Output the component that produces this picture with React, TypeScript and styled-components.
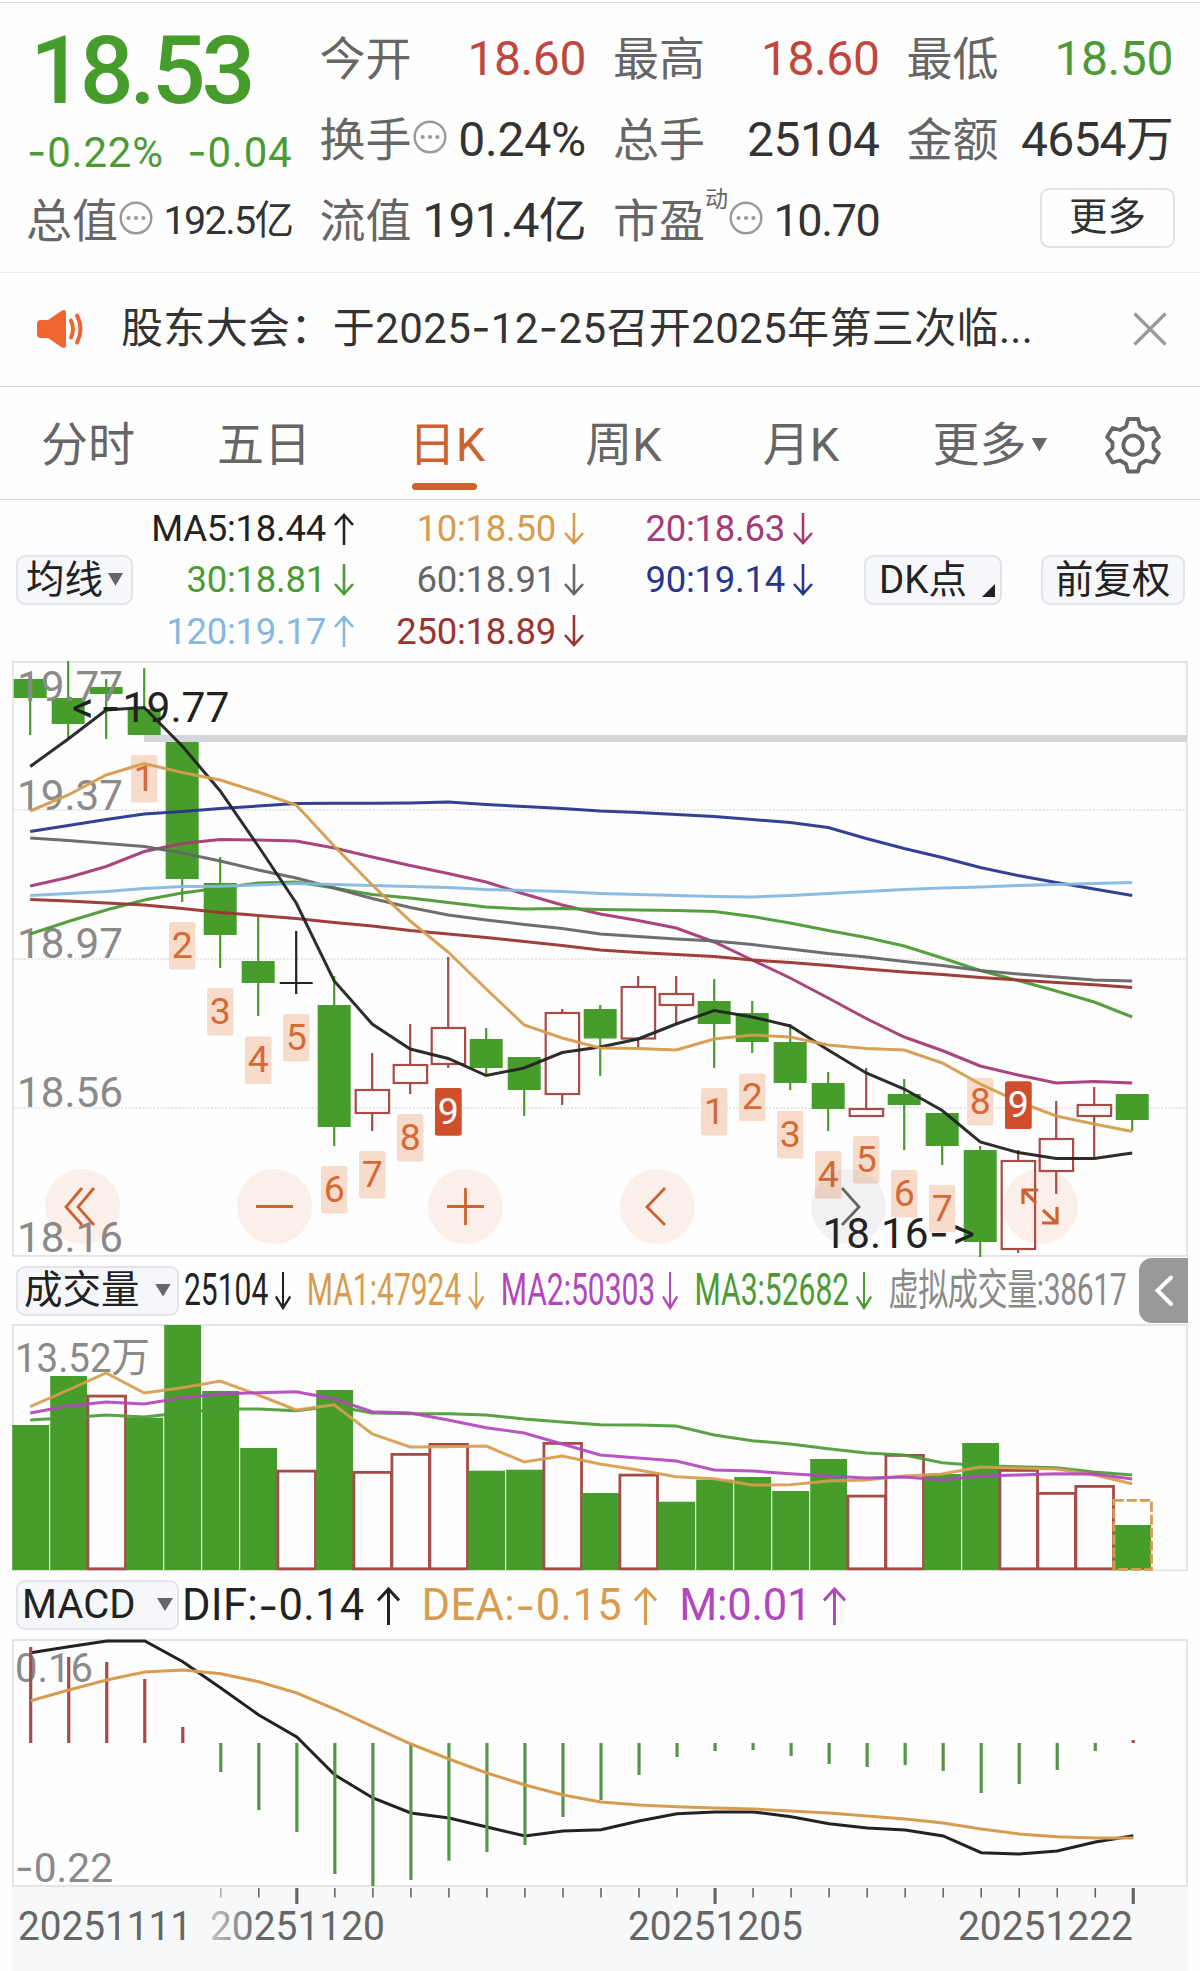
import React from "react";
import styled, { createGlobalStyle } from "styled-components";

const FONT = `Roboto, "Noto Sans CJK SC", "Liberation Sans", sans-serif`;
const C = {
  green: "#479d2c",
  textGreen: "#4c9a36",
  red: "#c1473e",
  candleRed: "#a64b45",
  ink: "#222",
  dark: "#333",
  grey: "#666",
  light: "#8a8a8a",
  orange: "#d79c4f",
  accent: "#cd622f",
  magenta: "#a53a78",
  navy: "#28378c",
  sky: "#86b8e0",
  maroon: "#993532",
  purple: "#b146bd",
  rule: "#dcdcdc",
};

const GlobalStyle = createGlobalStyle`
  *, *::before, *::after { box-sizing: border-box; }
  body { margin: 0; background: #fdfdfe; }
`;

const Page = styled.main`
  width: 1200px;
  height: 1971px;
  overflow: hidden;
  background: #fefefe;
  font-family: ${FONT};
  color: ${C.dark};
  display: flex;
  flex-direction: column;
  white-space: nowrap;
`;

/* ---------- text helpers ---------- */

const Dash = styled.span`
  font-family: Inter, sans-serif;
`;
const DashT = styled.tspan`
  font-family: Inter, sans-serif;
`;

const dashed = (text: string, Tag: React.ElementType = Dash) =>
  text.split(/(-)/).map((part, i) => (part === "-" ? <Tag key={i}>-</Tag> : part));

/* ---------- quote header ---------- */

const Quote = styled.section`
  height: 271px;
  padding: 15px 27px 0;
  border-top: 1px solid #d3d7d7;
  border-bottom: 1px solid #ececee;
  margin-top: 2px;
  flex: none;
  display: grid;
  grid-template-columns: repeat(4, 265.5px);
  grid-template-rows: repeat(3, 81px);
  column-gap: 28px;
`;

const PriceBlock = styled.div`
  grid-row: 1 / span 2;
  color: ${C.green};
`;
const Price = styled.div`
  font-size: 95px;
  font-weight: 500;
  line-height: 106px;
  letter-spacing: -4.2px;
  padding-left: 3px;
`;
const Change = styled.div`
  display: flex;
  justify-content: space-between;
  font-size: 42px;
  line-height: 56px;
  letter-spacing: 0.8px;
  color: ${C.textGreen};
`;

const Cell = styled.div`
  display: flex;
  align-items: center;
  height: 81px;
`;
const Label = styled.span`
  font-size: 46px;
  line-height: 60px;
  color: ${C.grey};
  margin-left: -1px;
`;
const Value = styled.span<{ $color?: string; $size?: number; $ls?: number }>`
  margin-left: auto;
  font-size: ${(p) => p.$size ?? 48}px;
  line-height: 60px;
  letter-spacing: ${(p) => p.$ls ?? -0.4}px;
  color: ${(p) => p.$color ?? C.dark};
`;
const Sup = styled.sup`
  align-self: flex-start;
  font-size: 23px;
  line-height: 26px;
  margin-top: 7px;
  color: ${C.grey};
`;
const MoreCell = styled(Cell)`
  justify-content: flex-end;
  padding-bottom: 5px;
`;
const MoreButton = styled.button`
  width: 135px;
  height: 60px;
  margin-right: -2px;
  padding: 0 0 3px;
  border: 2px solid #e0e2e3;
  border-radius: 9px;
  background: #fefefe;
  font: 38.5px/50px ${FONT};
  color: ${C.dark};
`;
const InfoSvg = styled.svg`
  flex: none;
  margin: -6px 0 0 1px;
`;

const Info = () => (
  <InfoSvg width="34" height="34" viewBox="0 0 34 34">
    <circle cx="17" cy="17" r="15.3" fill="none" stroke="#999" strokeWidth="2.4" />
    <circle cx="9.6" cy="17" r="2.1" fill="#999" />
    <circle cx="17" cy="17" r="2.1" fill="#999" />
    <circle cx="24.4" cy="17" r="2.1" fill="#999" />
  </InfoSvg>
);

/* ---------- news ---------- */

const News = styled.section`
  height: 114px;
  flex: none;
  border-bottom: 1px solid #cfcfd1;
  display: flex;
  align-items: center;
  padding: 0 33px 2px 36px;
`;
const NewsText = styled.span`
  margin-left: 33px;
  font-size: 42px;
  line-height: 60px;
  flex: 1;
  letter-spacing: 0.37px;
`;

/* ---------- tabs ---------- */

const Tabs = styled.nav`
  height: 113px;
  flex: none;
  border-bottom: 1px solid #cfcfd1;
  display: grid;
  grid-template-columns: 176px 176px 190px 163px 192px 186px 100px;
`;
const Tab = styled.div<{ $active?: boolean }>`
  display: flex;
  justify-content: center;
  align-items: center;
  position: relative;
  padding-top: 3px;
  font-size: 47px;
  line-height: 60px;
  color: ${(p) => (p.$active ? C.accent : C.grey)};
  &::after {
    content: "";
    display: ${(p) => (p.$active ? "block" : "none")};
    position: absolute;
    bottom: 9px;
    left: 60px;
    width: 65px;
    height: 7px;
    border-radius: 4px;
    background: ${C.accent};
  }
`;
const Triangle = styled.i<{ $w?: number; $h?: number }>`
  flex: none;
  width: ${(p) => p.$w ?? 15}px;
  height: ${(p) => p.$h ?? 13}px;
  background: ${C.grey};
  clip-path: polygon(0 0, 100% 0, 50% 100%);
`;

/* ---------- moving average legend ---------- */

const Legend = styled.section`
  height: 161px;
  flex: none;
  display: flex;
  align-items: center;
  padding: 0 15px 1px 16px;
`;
const Chip = styled.button<{ $w: number; $pad?: number; $size?: number }>`
  flex: none;
  width: ${(p) => p.$w}px;
  height: 50px;
  padding: 0 ${(p) => p.$pad ?? 8}px 1px;
  border: 2px solid #e0e3e7;
  border-radius: 9px;
  background: #f6f7fa;
  display: flex;
  align-items: center;
  justify-content: space-between;
  font: ${(p) => p.$size ?? 38.5}px/46px ${FONT};
  color: ${C.ink};
`;
const Corner = styled.i`
  width: 13px;
  height: 13px;
  align-self: flex-end;
  margin: 0 -8px 5px 0;
  background: ${C.ink};
  clip-path: polygon(100% 0, 100% 100%, 0 100%);
`;
const MaGrid = styled.div`
  display: grid;
  grid-template-columns: 221px 230px 229px;
  grid-auto-rows: 51.3px;
  margin-right: auto;
`;
const Ma = styled.span<{ $color: string }>`
  display: flex;
  align-items: center;
  justify-content: flex-end;
  font-size: 36.5px;
  letter-spacing: -0.25px;
  color: ${(p) => p.$color};
  svg { margin-left: 8px; }
`;
const ChipGap = styled.div`
  display: flex;
  gap: 39px;
`;

const Arrow = ({ up, w = 20, h = 32, sw = 2.6 }: { up?: boolean; w?: number; h?: number; sw?: number }) => {
  const m = w / 2;
  return (
    <svg width={w} height={h} viewBox={`0 0 ${w} ${h}`} fill="none" stroke="currentColor" strokeWidth={sw}>
      {up ? (
        <path d={`M${m} ${h}V2M1 ${m + 2}L${m} 2L${w - 1} ${m + 2}`} />
      ) : (
        <path d={`M${m} 0V${h - 2}M1 ${h - m - 2}L${m} ${h - 2}L${w - 1} ${h - m - 2}`} />
      )}
    </svg>
  );
};

/* ---------- charts ---------- */

const Panel = styled.section<{ $h: number }>`
  position: relative;
  flex: none;
  height: ${(p) => p.$h}px;
  width: 1176px;
  margin-left: 12px;
  svg { display: block; }
`;
const ChartText = styled.text`
  font-family: ${FONT};
`;

const X = (i: number) => 30.2 + 38.0 * i;
const line = (ys: number[], x: (i: number) => number = X) => ys.map((y, i) => `${x(i).toFixed(1)},${y}`).join(" ");

// kind, body top, body bottom, wick top, wick bottom
type Candle = ["g" | "r" | "x", number, number, number, number];
const candles: Candle[] = [
  ["g", 679, 698, 676, 735], ["g", 698, 724, 661, 739], ["g", 687, 694, 679, 739], ["g", 709, 735, 668, 735],
  ["g", 742, 879, 742, 902], ["g", 883, 935, 857, 968], ["g", 961, 983, 917, 1016], ["x", 983, 983, 931, 994],
  ["g", 1005, 1127, 976, 1146], ["r", 1089, 1114, 1053, 1131], ["r", 1064, 1084, 1024, 1094], ["r", 1027, 1065, 957, 1068],
  ["g", 1039, 1068, 1028, 1074], ["g", 1057, 1090, 1057, 1116], ["r", 1012, 1095, 1009, 1105], ["g", 1009, 1038.5, 1005, 1076],
  ["r", 986, 1039.5, 976, 1047], ["r", 993, 1006, 976, 1023], ["g", 1001, 1024, 979, 1068], ["g", 1013, 1042, 1001, 1053],
  ["g", 1042, 1083, 1024, 1090], ["g", 1083, 1109, 1072, 1131], ["r", 1108, 1117, 1068, 1117], ["g", 1094, 1105, 1079, 1150],
  ["g", 1113, 1146, 1113, 1165], ["g", 1150, 1242, 1146, 1257], ["r", 1160, 1250, 1150, 1253], ["r", 1138, 1172, 1101, 1194],
  ["r", 1104, 1117, 1087, 1157], ["g", 1094, 1120, 1094, 1131],
];

const averages: [string, number[]][] = [
  [C.navy, [831.5, 825.5, 819.5, 814, 811.5, 808.5, 806, 803.5, 803.3, 803.2, 803, 802, 804.5, 806.5, 808.5, 811, 812.5, 814.5, 816.5, 819.5, 822.5, 827.5, 838.5, 848.5, 857.5, 867.5, 875.5, 882.5, 889, 895.5]],
  [C.magenta, [886, 877.5, 866.5, 851.5, 843.5, 839.5, 840, 841, 848, 857, 865.5, 873.5, 882, 894, 905, 914, 920.5, 928, 942, 960, 978, 998, 1018.5, 1037, 1050.5, 1066, 1075, 1083, 1081.5, 1083]],
  [C.textGreen, [934, 921.5, 910, 900, 893, 888, 883, 882, 888, 894.5, 898, 902.5, 907, 909, 908.5, 909.5, 910, 910.5, 911.5, 916.5, 923, 930.5, 937.5, 946, 958, 970.5, 980.5, 991, 1002, 1017]],
  [C.grey, [838, 840.5, 843.5, 846.5, 853, 861, 870, 878, 888, 898.5, 907.5, 915, 920, 924.5, 928.5, 934, 936.5, 939, 941, 944.5, 949, 953.5, 957, 961.5, 965.5, 970.5, 974, 977, 980, 981]],
  [C.sky, [895.5, 893.5, 891.5, 888.5, 886.5, 886.3, 885, 883.5, 884.5, 885.5, 886.5, 887.5, 889.5, 890.5, 891.5, 893.5, 894.5, 895.5, 896.5, 897, 895.5, 893.5, 891.5, 889.5, 888, 887, 885.5, 884.5, 883.5, 882.5]],
  [C.maroon, [899.5, 901, 903, 905, 908.5, 912.5, 915.5, 918.5, 922.5, 926, 930.5, 934, 937.5, 941.5, 945.5, 950, 952.5, 954.5, 956.5, 960, 962.5, 965.5, 969, 972, 974.5, 977.5, 980, 982.5, 984.8, 987.5]],
  [C.ink, [766.5, 739, 710, 707.5, 746, 791, 846, 903, 981, 1024, 1049, 1058.5, 1075.5, 1068, 1052.5, 1047, 1039, 1024, 1010.5, 1017, 1026, 1050, 1073, 1089, 1110.5, 1142, 1152.5, 1158.5, 1158.5, 1153]],
  [C.orange, [811, 795, 775, 763.5, 772.5, 780, 792, 805, 846, 885, 921, 952, 989, 1025, 1038, 1048, 1048.5, 1050, 1039, 1035, 1037, 1045, 1048.5, 1050, 1063, 1084, 1101.5, 1116, 1124, 1131.5]],
];

// candle index, count, badge top
const counts: [number, number, number][] = [
  [3, 1, 755], [4, 2, 922], [5, 3, 988], [6, 4, 1036.5], [7, 5, 1014], [8, 6, 1166], [9, 7, 1151], [10, 8, 1114], [11, 9, 1088],
  [18, 1, 1088], [19, 2, 1073.5], [20, 3, 1111], [21, 4, 1151], [22, 5, 1136], [23, 6, 1170], [24, 7, 1185], [25, 8, 1078], [26, 9, 1081.5],
];

const priceTicks: [string, number][] = [["19.77", 701], ["19.37", 809.5], ["18.97", 958], ["18.56", 1107], ["18.16", 1252]];

const Controls = styled.div`
  position: absolute;
  left: 33px;
  bottom: 13px;
  display: flex;
  gap: 116.6px;
`;
const Round = styled.button<{ $muted?: boolean }>`
  width: 75px;
  height: 75px;
  padding: 0;
  border: 0;
  border-radius: 50%;
  background: ${(p) => (p.$muted ? "rgba(70,70,80,.07)" : "rgba(225,110,50,.1)")};
  color: ${(p) => (p.$muted ? C.grey : C.accent)};
`;
const controlPaths = ["M37 19L21 38L37 56M49 19L33 38L49 56", "M19 37.5H56", "M19 37.5H56M37.5 19V56", "M45 19L27 38L45 56", "M31 19L48 38L31 56", "M20 35V21H35M20.5 21.5L33 34M54 38V54H39M53 53.5L40 41"];

const PriceChart = () => (
  <Panel $h={596}>
    <svg width="1176" height="596" viewBox="12 661 1176 596">
      <rect x="12.8" y="661.9" width="1174" height="594" fill="none" stroke="#e2e2e2" strokeWidth="1.8" />
      {[810, 959, 1108].map((y) => (
        <path key={y} d={`M13 ${y}H1187`} stroke="#dedede" strokeWidth="1.4" strokeDasharray="2 1.6" />
      ))}
      <rect x="144" y="735" width="1043" height="7" fill="#d5d6db" />
      {candles.map(([kind, top, bottom, high, low], i) => {
        const x = X(i);
        if (kind === "x")
          return <path key={i} d={`M${x} ${high}V${low}M${x - 16.5} ${top}H${x + 16.5}`} stroke={C.ink} strokeWidth="2.2" />;
        if (kind === "g")
          return (
            <g key={i}>
              <path d={`M${x} ${high}V${low}`} stroke={C.green} strokeWidth="2.2" />
              <rect x={x - 16.5} y={top} width="33" height={bottom - top} fill={C.green} />
            </g>
          );
        return (
          <g key={i} fill="none" stroke={C.candleRed} strokeWidth="2.2">
            <path d={`M${x} ${high}V${top}M${x} ${bottom}V${low}`} />
            <rect x={x - 16.5} y={top + 1} width="33.4" height={bottom - top - 2} />
          </g>
        );
      })}
      {counts.map(([i, n, y]) => (
        <rect key={i} x={X(i) - 13.2} y={y} width="26.5" height="47.5" rx="2.5" fill={n === 9 ? "#cf4f2c" : "#f8dccb"} />
      ))}
      {priceTicks.map(([t, y]) => (
        <ChartText key={t} x="17" y={y} fontSize="43" fill={C.light} textLength="106" lengthAdjust="spacingAndGlyphs">{t}</ChartText>
      ))}
      {averages.map(([color, ys]) => (
        <polyline key={color} points={line(ys)} fill="none" stroke={color} strokeWidth="3" strokeOpacity="0.95" />
      ))}
      {counts.map(([i, n, y]) => {
        const solid = n === 9;
        return (
          <g key={i}>
            {solid && <rect x={X(i) - 13.2} y={y} width="26.5" height="47.5" rx="2.5" fill="#cf4f2c" />}
            <ChartText x={X(i)} y={y + 35.8} fontSize="37.5" textAnchor="middle" fill={solid ? "#fff" : "#d56a37"}>{n}</ChartText>
          </g>
        );
      })}
      <ChartText y="721.5" fontSize="43" fill={C.ink}>
        <tspan x="72">&lt;</tspan>
        <DashT x="100.500">-</DashT>
        <tspan x="122.500" textLength="107" lengthAdjust="spacingAndGlyphs">19.77</tspan>
      </ChartText>
      <ChartText y="1247.500" fontSize="43" fill={C.ink}>
        <tspan x="822.500" textLength="106" lengthAdjust="spacingAndGlyphs">18.16</tspan>
        <DashT x="929">-</DashT>
        <tspan x="952.500">&gt;</tspan>
      </ChartText>
    </svg>
    <Controls>
      {controlPaths.map((d, i) => (
        <Round key={d} $muted={i === 4}>
          <svg width="75" height="75" viewBox="0 0 75 75" fill="none" stroke="currentColor" strokeWidth={i === 5 ? 3.2 : 2.8}>
            <path d={d} />
          </svg>
        </Round>
      ))}
    </Controls>
  </Panel>
);

/* ---------- indicator headers ---------- */

const Strip = styled.div<{ $h: number }>`
  flex: none;
  height: ${(p) => p.$h}px;
  display: flex;
  align-items: center;
  padding: 0 12px 0 16px;
`;
const Narrow = styled.div`
  flex: none;
  width: 949px;
  margin-left: 5px;
  margin-right: 5px;
  display: flex;
  font-size: 43.5px;
  line-height: 60px;
  transform: scaleX(0.69);
  transform-origin: left;
`;
const VolItem = styled.span<{ $color: string; $w: number; $ls?: number }>`
  flex: none;
  width: ${(p) => p.$w}px;
  display: flex;
  align-items: center;
  letter-spacing: ${(p) => p.$ls ?? 0}px;
  color: ${(p) => p.$color};
  svg { margin-left: 10px; }
`;
const SideTab = styled.button`
  flex: none;
  width: 49px;
  height: 65px;
  margin-left: auto;
  padding: 0;
  border: 0;
  border-radius: 13px 0 0 13px;
  background: #999;
  svg { display: block; }
`;
const MacdItem = styled.span<{ $color: string; $ls?: number }>`
  display: flex;
  align-items: center;
  margin-right: 22px;
  font-size: 43.5px;
  line-height: 60px;
  padding-top: 1px;
  letter-spacing: ${(p) => p.$ls ?? 0}px;
  color: ${(p) => p.$color};
  &:first-of-type { margin-left: 3px; }
  svg { margin-left: 12px; }
`;

/* ---------- volume ---------- */

const volumes: ["g" | "r", number][] = [
  ["g", 1425], ["g", 1376], ["r", 1394.7], ["g", 1417.7], ["g", 1325], ["g", 1391], ["g", 1448], ["r", 1469.7], ["g", 1390], ["r", 1471],
  ["r", 1453], ["r", 1443], ["g", 1470.7], ["g", 1469.7], ["r", 1442], ["g", 1493], ["r", 1473.7], ["g", 1501.7], ["g", 1479.7], ["g", 1477],
  ["g", 1491], ["g", 1459], ["r", 1494.7], ["r", 1454], ["g", 1474], ["g", 1443], ["r", 1469], ["r", 1492], ["r", 1485], ["g", 1525],
];
const volumeLines: [string, number[]][] = [
  [C.textGreen, [1420, 1417.7, 1415, 1417, 1412.7, 1409, 1409, 1410.7, 1406, 1413, 1413.7, 1413.7, 1415, 1419, 1422, 1424.7, 1425, 1426, 1435, 1440.7, 1444, 1448.7, 1453, 1455, 1462.7, 1465.7, 1466.7, 1467.7, 1472, 1475]],
  [C.orange, [1406.7, 1390, 1373, 1393, 1387.7, 1381, 1395, 1410, 1404.7, 1434, 1447, 1446.7, 1446, 1462, 1456, 1464, 1470, 1476.7, 1478.7, 1485, 1484.7, 1481, 1480, 1476, 1474, 1467, 1468, 1469, 1475, 1483.7]],
  [C.purple, [1413, 1406, 1402, 1404, 1397.7, 1394, 1392.7, 1391.7, 1399, 1411.7, 1413, 1420, 1427.7, 1433, 1444, 1455, 1458, 1461, 1470, 1471, 1473.7, 1476, 1478, 1477, 1480, 1476, 1475, 1473.7, 1474, 1479]],
];

const VolumeChart = () => (
  <Panel $h={247}>
    <svg width="1176" height="247" viewBox="12 1324 1176 247">
      <rect x="12.8" y="1325" width="1174" height="245.5" fill="none" stroke="#e2e2e2" strokeWidth="1.8" />
      {volumes.map(([kind, top], i) =>
        kind === "g" ? (
          <rect key={i} x={X(i) - 18} y={top} width="36.9" height={1570 - top} fill={C.green} />
        ) : (
          <rect key={i} x={X(i) - 18.3} y={top + 1.4} width="37.6" height={1568.8 - top - 1.4} fill="#fefefe" stroke={C.candleRed} strokeWidth="2.8" />
        )
      )}
      <rect x={X(29) - 18.3} y="1500.3" width="37.6" height="69" fill="none" stroke={C.orange} strokeWidth="2.8" strokeDasharray="10 3" />
      <ChartText x="15" y="1371.5" fontSize="41" fill={C.light} textLength="135" lengthAdjust="spacingAndGlyphs">13.52万</ChartText>
      {volumeLines.map(([color, ys]) => (
        <polyline key={color} points={line(ys)} fill="none" stroke={color} strokeWidth="3" strokeOpacity="0.92" />
      ))}
    </svg>
  </Panel>
);

/* ---------- MACD ---------- */

const MX = (i: number) => 30.7 + 38.02 * i;
const macdBars = [1647, 1657, 1662, 1679, 1727, 1772, 1810, 1832, 1874, 1886, 1880, 1860.7, 1852, 1845, 1817, 1800, 1775, 1757, 1751, 1750, 1756, 1764, 1767, 1765, 1771, 1793, 1784, 1770, 1751, 1740];
const dif = [1652.7, 1646.7, 1641, 1641, 1661.7, 1688, 1715, 1737, 1775, 1798, 1813, 1818, 1827, 1836, 1831, 1829.7, 1821, 1813.7, 1812, 1812, 1816.7, 1823.7, 1828, 1830, 1836, 1852.7, 1854, 1851, 1842, 1835.7];
const dea = [1700.7, 1690, 1680, 1672, 1670, 1673.7, 1681.7, 1693, 1709, 1726.7, 1744, 1759, 1773, 1785, 1795, 1802, 1805, 1806.7, 1808, 1809, 1811, 1813, 1816, 1819, 1823, 1829, 1834, 1836.7, 1838, 1838];

const MacdChart = () => (
  <Panel $h={248}>
    <svg width="1176" height="248" viewBox="12 1639 1176 248">
      <rect x="12.8" y="1640" width="1174" height="246" fill="none" stroke="#e2e2e2" strokeWidth="1.8" />
      <ChartText x="15" y="1682" fontSize="41" fill={C.light} textLength="78" lengthAdjust="spacingAndGlyphs">0.16</ChartText>
      <ChartText x="15" y="1881.5" fontSize="41" fill={C.light} textLength="98" lengthAdjust="spacingAndGlyphs">{dashed("-0.22", DashT)}</ChartText>
      <polyline points={line(dif, MX)} fill="none" stroke={C.ink} strokeWidth="3" />
      {macdBars.map((y, i) => (
        <path key={i} d={`M${MX(i)} 1743V${y}`} stroke={y < 1743 ? C.candleRed : "#559548"} strokeWidth="3.2" />
      ))}
      <polyline points={line(dea, MX)} fill="none" stroke={C.orange} strokeWidth="3" />
    </svg>
  </Panel>
);

const AxisPanel = styled(Panel)`
  background: #f7f8fa;
`;
const dates: [string, number, number][] = [["20251111", 18, 174], ["20251120", 210, 175], ["20251205", 628, 175], ["20251222", 958, 175]];

const Axis = () => (
  <AxisPanel $h={84}>
    <svg width="1176" height="84" viewBox="12 1887 1176 84">
      <defs>
        <linearGradient id="fade">
          <stop offset="0" stopColor="#f7f8fa" stopOpacity="0.85" />
          <stop offset="1" stopColor="#f7f8fa" stopOpacity="0" />
        </linearGradient>
      </defs>
      {macdBars.slice(5).map((_, k) => {
        const i = k + 5;
        const major = i === 7 || i === 18 || i === 29;
        return <path key={i} d={`M${MX(i)} 1888V${major ? 1904 : 1897.5}`} stroke={C.grey} strokeWidth={major ? 3.2 : 1.6} />;
      })}
      {dates.map(([t, x, w]) => (
        <ChartText key={t} x={x} y="1940" fontSize="41" fill={C.grey} textLength={w} lengthAdjust="spacingAndGlyphs">{t}</ChartText>
      ))}
      <rect x="196" y="1888" width="62" height="83" fill="url(#fade)" />
    </svg>
  </AxisPanel>
);

/* ---------- page ---------- */

export default function App() {
  return (
    <>
      <GlobalStyle />
      <Page>
        <Quote>
          <PriceBlock>
            <Price>18.53</Price>
            <Change>
              <span>{dashed("-0.22%")}</span>
              <span>{dashed("-0.04")}</span>
            </Change>
          </PriceBlock>
          <Cell><Label>今开</Label><Value $color={C.red}>18.60</Value></Cell>
          <Cell><Label>最高</Label><Value $color={C.red}>18.60</Value></Cell>
          <Cell><Label>最低</Label><Value $color={C.textGreen}>18.50</Value></Cell>
          <Cell><Label>换手</Label><Info /><Value $ls={-0.2}>0.24%</Value></Cell>
          <Cell><Label>总手</Label><Value $ls={-0.5}>25104</Value></Cell>
          <Cell><Label>金额</Label><Value $ls={-0.8}>4654万</Value></Cell>
          <Cell><Label>总值</Label><Info /><Value $size={39.5} $ls={-1.6}>192.5亿</Value></Cell>
          <Cell><Label>流值</Label><Value $ls={-0.8}>191.4亿</Value></Cell>
          <Cell><Label>市盈</Label><Sup>动</Sup><Info /><Value $size={45} $ls={-1.4}>10.70</Value></Cell>
          <MoreCell><MoreButton>更多</MoreButton></MoreCell>
        </Quote>

        <News>
          <svg width="52" height="44" viewBox="0 0 52 44">
            <path d="M5 13H12L26 3.5Q30 2 30 6V38Q30 42 26 40.5L12 31H5Q1 31 1 27V17Q1 13 5 13Z" fill="#ef6430" />
            <path d="M35 13.5Q39 22 35 30.5M41 8.5Q48 22 41 35.5" fill="none" stroke="#ef6430" strokeWidth="4" strokeLinecap="round" />
          </svg>
          <NewsText>{dashed("股东大会：于2025-12-25召开2025年第三次临...")}</NewsText>
          <svg width="34" height="34" viewBox="0 0 34 34" stroke="#999" strokeWidth="3.2">
            <path d="M1.5 1.5L32.5 32.5M32.5 1.5L1.5 32.5" />
          </svg>
        </News>

        <Tabs>
          <Tab>分时</Tab>
          <Tab>五日</Tab>
          <Tab $active>日K</Tab>
          <Tab>周K</Tab>
          <Tab>月K</Tab>
          <Tab>更多<span>&#8202;</span><Triangle $w={16} $h={14} /></Tab>
          <Tab>
            <svg width="58" height="60" viewBox="0 0 58 60" fill="none" stroke={C.grey} strokeWidth="3.8" strokeLinejoin="round">
              <path d="M24 4H34L36 11.5L42 15L49.5 13L55 22L49.5 27.5V33L55 38.5L49.5 47.5L42 45.5L36 49L34 56.5H24L22 49L16 45.5L8.5 47.5L3 38.5L8.5 33V27.5L3 22L8.5 13L16 15L22 11.5Z" />
              <circle cx="29" cy="30.2" r="9.6" />
            </svg>
          </Tab>
        </Tabs>

        <Legend>
          <Chip $w={117}>均线<Triangle /></Chip>
          <MaGrid>
            <Ma $color={C.ink}>MA5:18.44<Arrow up /></Ma>
            <Ma $color={C.orange}>10:18.50<Arrow /></Ma>
            <Ma $color={C.magenta}>20:18.63<Arrow /></Ma>
            <Ma $color={C.textGreen}>30:18.81<Arrow /></Ma>
            <Ma $color={C.grey}>60:18.91<Arrow /></Ma>
            <Ma $color={C.navy}>90:19.14<Arrow /></Ma>
            <Ma $color={C.sky}>120:19.17<Arrow up /></Ma>
            <Ma $color={C.maroon}>250:18.89<Arrow /></Ma>
          </MaGrid>
          <ChipGap>
            <Chip $w={138} $pad={13}>DK点<Corner /></Chip>
            <Chip $w={144} $pad={12}>前复权</Chip>
          </ChipGap>
        </Legend>

        <PriceChart />

        <Strip $h={67}>
          <Chip $w={163} $pad={6}>成交量<Triangle $w={16} /></Chip>
          <Narrow>
            <VolItem $color={C.ink} $w={178}>25104<Arrow w={23} h={38} sw={3} /></VolItem>
            <VolItem $color={C.orange} $w={281}>MA1:47924<Arrow w={23} h={38} sw={3} /></VolItem>
            <VolItem $color={C.purple} $w={281}>MA2:50303<Arrow w={23} h={38} sw={3} /></VolItem>
            <VolItem $color={C.textGreen} $w={281}>MA3:52682<Arrow w={23} h={38} sw={3} /></VolItem>
            <VolItem $color={C.light} $w={345} $ls={-0.5}>虚拟成交量:38617</VolItem>
          </Narrow>
          <SideTab>
            <svg width="49" height="65" viewBox="0 0 49 65" fill="none" stroke="#fff" strokeWidth="4" strokeLinecap="round">
              <path d="M32 19.5L18.5 32.5L32 46" />
            </svg>
          </SideTab>
        </Strip>

        <VolumeChart />

        <Strip $h={68}>
          <Chip $w={163} $pad={4} $size={40}>MACD<Triangle $w={16} /></Chip>
          <MacdItem $color={C.ink} $ls={0.3}>{dashed("DIF:-0.14")}<Arrow up w={23} h={38} sw={3} /></MacdItem>
          <MacdItem $color={C.orange} $ls={0.4}>{dashed("DEA:-0.15")}<Arrow up w={23} h={38} sw={3} /></MacdItem>
          <MacdItem $color={C.purple} $ls={-0.2}>M:0.01<Arrow up w={23} h={38} sw={3} /></MacdItem>
        </Strip>

        <MacdChart />
        <Axis />
      </Page>
    </>
  );
}
